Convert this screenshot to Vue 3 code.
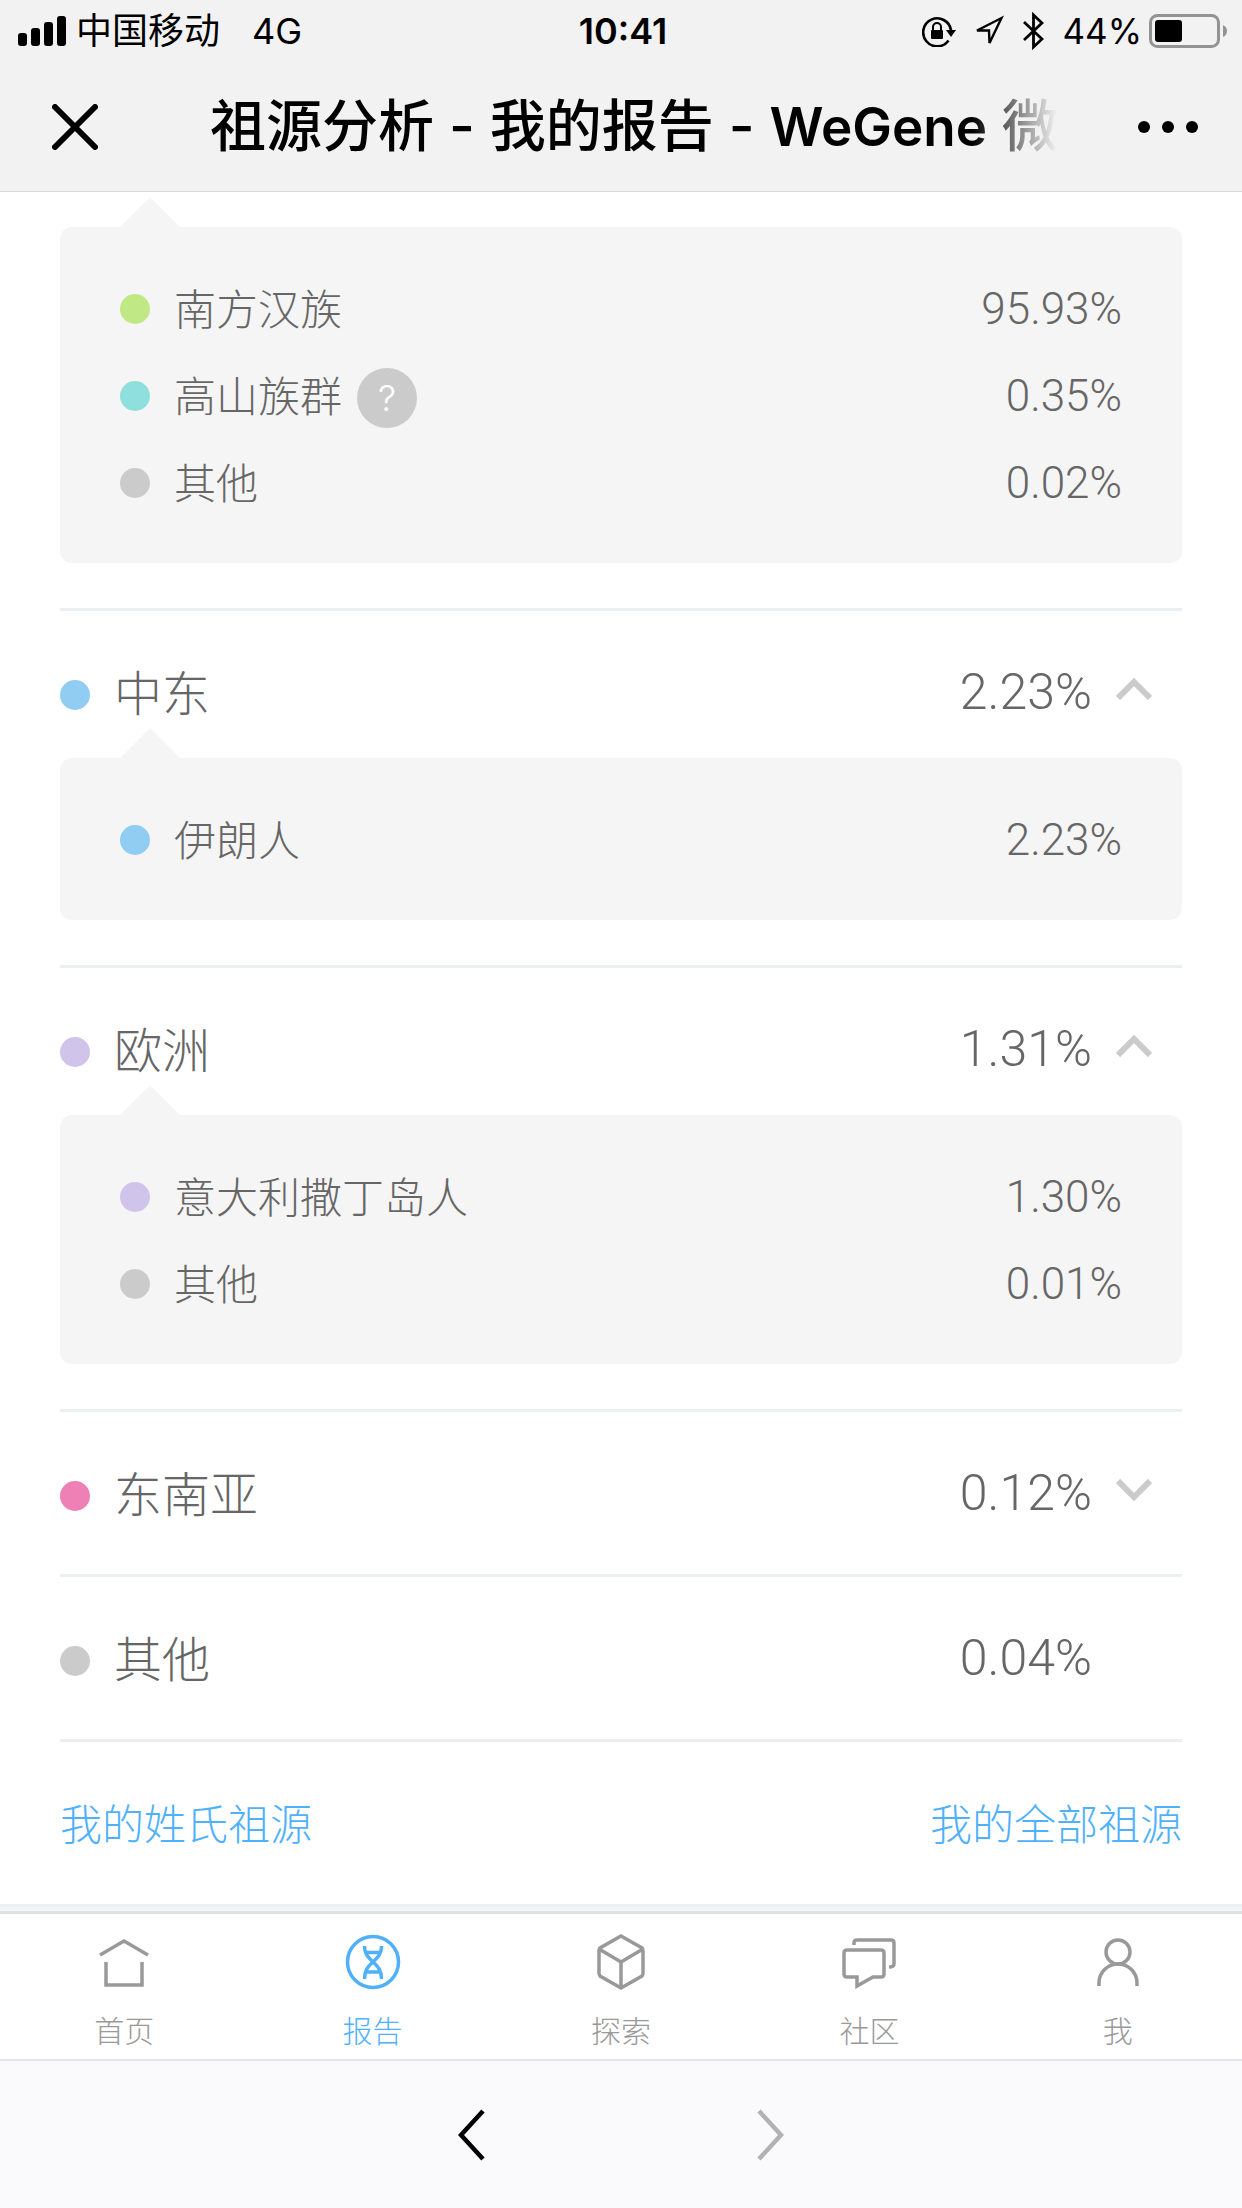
<script setup>
import { ref } from 'vue'

const gray = '#cbcbcb'

const leading = [
  { name: '南方汉族', value: '95.93%', color: '#c0e985' },
  { name: '高山族群', value: '0.35%', color: '#8fdfdf', help: true },
  { name: '其他', value: '0.02%', color: gray },
]

const regions = ref([
  {
    name: '中东', value: '2.23%', color: '#91cdf2', open: true,
    items: [{ name: '伊朗人', value: '2.23%', color: '#91cdf2' }],
  },
  {
    name: '欧洲', value: '1.31%', color: '#d1c4eb', open: true,
    items: [
      { name: '意大利撒丁岛人', value: '1.30%', color: '#d1c4eb' },
      { name: '其他', value: '0.01%', color: gray },
    ],
  },
  { name: '东南亚', value: '0.12%', color: '#ef80b6', open: false, items: [] },
  { name: '其他', value: '0.04%', color: gray, open: false },
])
</script>

<template>
  <div class="app">
    <header class="top">
      <div class="status">
        <div class="status-left">
          <svg class="signal" width="48" height="30" viewBox="0 0 48 30">
            <rect x="0" y="17" width="9" height="13" rx="3" />
            <rect x="13" y="12" width="9" height="18" rx="3" />
            <rect x="26" y="6" width="9" height="24" rx="3" />
            <rect x="39" y="0" width="9" height="30" rx="3" />
          </svg>
          <span>中国移动</span>
          <span class="network">4G</span>
        </div>
        <time class="clock">10:41</time>
        <div class="status-right">
          <svg width="34" height="32" viewBox="0 0 34 32">
            <path d="M26.600 25.500A14 14 0 1 1 29 15" fill="none" stroke="#000" stroke-width="2.600" />
            <path d="M24 15h10l-5 7z" />
            <rect x="9" y="15" width="12" height="9" rx="1" />
            <path d="M11 16v-4a4 4 0 0 1 8 0v4" fill="none" stroke="#000" stroke-width="2" />
          </svg>
          <svg width="30" height="32" viewBox="0 0 30 32">
            <path d="M3 15.500L27.500 3L15.500 28L15 15.500z" fill="none" stroke="#000" stroke-width="2.400" />
          </svg>
          <svg class="bluetooth" width="22" height="38" viewBox="0 0 22 38">
            <path d="M2 10L20 27L11.500 35V3L20 11L2 28" fill="none" stroke="#000" stroke-width="2.800" />
          </svg>
          <span>44%</span>
          <svg class="battery" width="79" height="34" viewBox="0 0 79 34">
            <rect x="1.500" y="1.500" width="68" height="31" rx="7" fill="none" stroke="#939393" stroke-width="3" />
            <rect x="6" y="6" width="27" height="22" rx="3" />
            <path d="M74 11q4 2 4 6t-4 6z" fill="#939393" />
          </svg>
        </div>
      </div>
      <div class="nav">
        <button class="icon-button" type="button" aria-label="关闭">
          <svg width="46" height="46" viewBox="0 0 46 46">
            <path d="M3 3L43 43M43 3L3 43" fill="none" stroke="#000" stroke-width="6" stroke-linecap="round" />
          </svg>
        </button>
        <h1 class="title">祖源分析 - 我的报告 - <span class="brand">WeGene</span> 微基因</h1>
        <button class="icon-button" type="button" aria-label="更多">
          <svg width="60" height="14" viewBox="0 0 60 14">
            <circle cx="6" cy="7" r="6" /><circle cx="30" cy="7" r="6" /><circle cx="54" cy="7" r="6" />
          </svg>
        </button>
      </div>
    </header>

    <main class="report">
      <section class="region first">
        <ul class="card">
          <li v-for="item in leading" :key="item.name" class="item">
            <i class="dot" :style="{ background: item.color }"></i>
            <span class="name">{{ item.name }}</span>
            <button v-if="item.help" class="help" type="button">?</button>
            <span class="value">{{ item.value }}</span>
          </li>
        </ul>
      </section>

      <section v-for="region in regions" :key="region.name" class="region" :class="{ open: region.open }">
        <component
          :is="region.items ? 'button' : 'div'"
          class="heading"
          :type="region.items ? 'button' : null"
          @click="region.open = region.items && !region.open"
        >
          <i class="dot" :style="{ background: region.color }"></i>
          <span class="name">{{ region.name }}</span>
          <span class="value">{{ region.value }}</span>
          <span class="arrow">
            <svg v-if="region.items" width="36" height="22" viewBox="0 0 36 22">
              <path
                :d="region.open ? 'M2 20L18 4L34 20' : 'M2 2L18 18L34 2'"
                fill="none" stroke="#cbcbcb" stroke-width="6"
              />
            </svg>
          </span>
        </component>
        <ul v-if="region.open" class="card">
          <li v-for="item in region.items" :key="item.name" class="item">
            <i class="dot" :style="{ background: item.color }"></i>
            <span class="name">{{ item.name }}</span>
            <span class="value">{{ item.value }}</span>
          </li>
        </ul>
      </section>

      <div class="links">
        <a href="#surname">我的姓氏祖源</a>
        <a href="#all">我的全部祖源</a>
      </div>
    </main>

    <div class="band"></div>

    <nav class="tabs">
      <a class="tab" href="#home">
        <svg width="56" height="56" viewBox="0 0 56 56">
          <path d="M4 21L28 7L52 21M10 28V51H46V28" />
        </svg>
        <span>首页</span>
      </a>
      <a class="tab active" href="#report" aria-current="page">
        <svg width="56" height="56" viewBox="0 0 56 56">
          <circle cx="28" cy="28" r="25.500" />
          <path d="M19.500 12C19.500 21 24 24 28 28S36.500 35 36.500 45M36.500 12C36.500 21 32 24 28 28S19.500 35 19.500 45M21 18.500H35M21 38H35" />
        </svg>
        <span>报告</span>
      </a>
      <a class="tab" href="#explore">
        <svg width="56" height="56" viewBox="0 0 56 56">
          <path d="M28 2L49 14Q50 15 50 17V39Q50 41 49 42L28 54L7 42Q6 41 6 39V17Q6 15 7 14ZM6 15L28 28L50 15M28 28V54" />
        </svg>
        <span>探索</span>
      </a>
      <a class="tab" href="#community">
        <svg width="56" height="56" viewBox="0 0 56 56">
          <path d="M6 16H40Q43 16 43 19V40Q43 43 40 43H32L16 52V43H6Q3 43 3 40V19Q3 16 6 16ZM13 11V9Q13 6 16 6H50Q53 6 53 9V30Q53 33 48 33" />
        </svg>
        <span>社区</span>
      </a>
      <a class="tab" href="#me">
        <svg width="56" height="56" viewBox="0 0 56 56">
          <circle cx="28" cy="18" r="12" />
          <path d="M9 52V49A19 19 0 0 1 47 49V52" />
        </svg>
        <span>我</span>
      </a>
    </nav>

    <footer class="toolbar">
      <button class="icon-button" type="button" aria-label="后退">
        <svg width="28" height="52" viewBox="0 0 28 52">
          <path d="M25 2L3 26L25 50" fill="none" stroke="#000" stroke-width="4.500" />
        </svg>
      </button>
      <button class="icon-button" type="button" aria-label="前进" disabled>
        <svg width="28" height="52" viewBox="0 0 28 52">
          <path d="M3 2L25 26L3 50" fill="none" stroke="#b2b2b2" stroke-width="4.500" />
        </svg>
      </button>
    </footer>
  </div>
</template>

<style>
body {
  margin: 0;
  background: #fafafc;
}
</style>

<style scoped>
.app {
  display: flex;
  flex-direction: column;
  min-height: 100vh;
  background: #fff;
  color: #666;
  font-family: Inter, "Noto Sans CJK SC", sans-serif;
  font-weight: 300;
}
svg {
  display: block;
  flex: none;
}
button {
  padding: 0;
  border: 0;
  background: none;
  color: inherit;
  font: inherit;
  text-align: left;
}
a {
  text-decoration: none;
}
.top {
  background: #f2f2f2;
  border-bottom: 1px solid #d9d9d9;
  color: #000;
}
.status {
  display: grid;
  grid-template-columns: 1fr auto 1fr;
  align-items: center;
  height: 62px;
  padding: 0 14px 0 18px;
  font-size: 36px;
  font-weight: 400;
  line-height: 60px;
}
.status-left,
.status-right {
  display: flex;
  align-items: center;
}
.signal {
  margin-right: 10px;
}
.network {
  margin-left: 32px;
}
.clock {
  font-weight: 600;
}
.status-right {
  justify-content: flex-end;
  font-size: 35px;
}
.status-right svg {
  margin-right: 18px;
}
.status-right .battery {
  margin: 0 0 0 7px;
}
.nav {
  display: flex;
  align-items: center;
  height: 129px;
  padding: 0 44px 0 52px;
}
.icon-button {
  flex: none;
}
.title {
  flex: 1;
  min-width: 0;
  margin: 0 76px 0 112px;
  overflow: hidden;
  font-size: 56px;
  font-weight: 500;
  line-height: 80px;
  white-space: nowrap;
  mask-image: linear-gradient(to right, #000 calc(100% - 90px), transparent calc(100% - 5px));
}
.brand {
  font-size: 53px;
  font-weight: 600;
}
.report {
  padding: 0 60px;
}
.region {
  border-bottom: 3px solid #ebeff2;
}
.region.open {
  padding-bottom: 45px;
}
.region.first {
  padding: 35px 0 45px;
}
.heading {
  display: flex;
  align-items: center;
  width: 100%;
  height: 162px;
  font-size: 48px;
}
.dot {
  flex: none;
  width: 30px;
  height: 30px;
  margin-right: 24px;
  border-radius: 50%;
}
.heading .dot {
  margin-top: 6px;
}
.name {
  padding-bottom: 4px;
}
.value {
  margin-left: auto;
  font-family: Roboto, "Liberation Sans", sans-serif;
  font-size: 44px;
}
.heading .value {
  font-size: 50px;
}
.arrow {
  width: 36px;
  margin: 0 30px 6px 24px;
}
.card {
  position: relative;
  margin: 0;
  padding: 38px 60px 37px;
  border-radius: 12px;
  background: #f5f5f5;
  list-style: none;
}
.open .card {
  margin-top: -15px;
}
.card::before {
  content: "";
  position: absolute;
  bottom: 100%;
  left: 60px;
  border: 30px solid transparent;
  border-top: 0;
  border-bottom-color: #f5f5f5;
}
.item {
  display: flex;
  align-items: center;
  height: 87px;
  font-size: 42px;
}
.help {
  width: 60px;
  height: 60px;
  margin: 4px 0 0 15px;
  border-radius: 50%;
  background: #cbcbcb;
  color: #fff;
  font-size: 36px;
  text-align: center;
}
.links {
  display: flex;
  align-items: center;
  justify-content: space-between;
  height: 158px;
  padding-bottom: 4px;
  font-size: 42px;
}
.links a {
  color: #4fb1fb;
}
.band {
  height: 4px;
  border-top: 3px solid #ebeff2;
  border-bottom: 3px solid #dfe3e7;
  background: #f2f5f8;
}
.tabs {
  display: flex;
  border-bottom: 2px solid #e5e5e5;
}
.tab {
  flex: 1;
  display: flex;
  flex-direction: column;
  align-items: center;
  gap: 19px;
  height: 125px;
  padding-top: 20px;
  color: #999;
  font-size: 30px;
  line-height: 44px;
}
.tab.active {
  color: #4fb1fb;
}
.tab svg {
  fill: none;
  stroke: currentColor;
  stroke-width: 3.5;
}
.toolbar {
  flex: 1;
  display: flex;
  align-items: center;
  justify-content: center;
  gap: 270px;
  min-height: 147px;
  background: #fafafc;
}
</style>
